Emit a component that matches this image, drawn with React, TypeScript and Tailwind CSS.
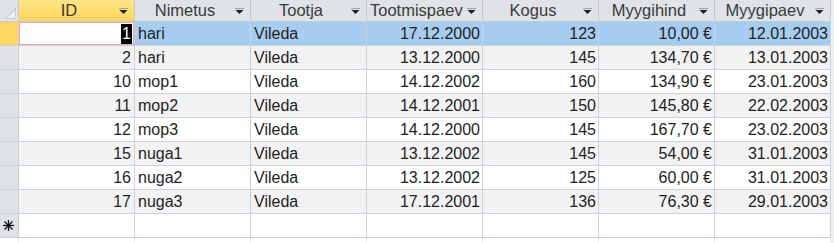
import React from 'react';

interface Row {
  id: number;
  nimetus: string;
  tootja: string;
  tootmispaev: string;
  kogus: number;
  hind: string;
  myygipaev: string;
}

const rows: Row[] = [
  { id: 1, nimetus: 'hari', tootja: 'Vileda', tootmispaev: '17.12.2000', kogus: 123, hind: '10,00 €', myygipaev: '12.01.2003' },
  { id: 2, nimetus: 'hari', tootja: 'Vileda', tootmispaev: '13.12.2000', kogus: 145, hind: '134,70 €', myygipaev: '13.01.2003' },
  { id: 10, nimetus: 'mop1', tootja: 'Vileda', tootmispaev: '14.12.2002', kogus: 160, hind: '134,90 €', myygipaev: '23.01.2003' },
  { id: 11, nimetus: 'mop2', tootja: 'Vileda', tootmispaev: '14.12.2001', kogus: 150, hind: '145,80 €', myygipaev: '22.02.2003' },
  { id: 12, nimetus: 'mop3', tootja: 'Vileda', tootmispaev: '14.12.2000', kogus: 145, hind: '167,70 €', myygipaev: '23.02.2003' },
  { id: 15, nimetus: 'nuga1', tootja: 'Vileda', tootmispaev: '13.12.2002', kogus: 145, hind: '54,00 €', myygipaev: '31.01.2003' },
  { id: 16, nimetus: 'nuga2', tootja: 'Vileda', tootmispaev: '13.12.2002', kogus: 125, hind: '60,00 €', myygipaev: '31.01.2003' },
  { id: 17, nimetus: 'nuga3', tootja: 'Vileda', tootmispaev: '17.12.2001', kogus: 136, hind: '76,30 €', myygipaev: '29.01.2003' },
];

const headers = ['ID', 'Nimetus', 'Tootja', 'Tootmispaev', 'Kogus', 'Myygihind', 'Myygipaev'];

function FilterArrow() {
  return (
    <svg width="9" height="6" viewBox="0 0 9 6" className="shrink-0">
      <rect x="0" y="0" width="9" height="1" fill="#9aa2ad" />
      <path d="M0.5 2 H8.5 L4.5 6 Z" fill="#1f1f1f" />
    </svg>
  );
}

function NewRowStar() {
  return (
    <svg width="11" height="11" viewBox="0 0 11 11">
      <g stroke="#111" strokeWidth="1.3">
        <line x1="5.5" y1="0" x2="5.5" y2="11" />
        <line x1="0" y1="5.5" x2="11" y2="5.5" />
        <line x1="1.5" y1="1.5" x2="9.5" y2="9.5" />
        <line x1="9.5" y1="1.5" x2="1.5" y2="9.5" />
      </g>
    </svg>
  );
}

const cell = 'h-[24px] border-r border-b border-[#c8d1de] flex items-center overflow-hidden whitespace-nowrap';

export default function App() {
  return (
    <div
      className="w-[834px] h-[243px] overflow-hidden bg-[#f0f0f0] text-[16px] text-[#1e1e1e]"
      style={{ fontFamily: '"Liberation Sans", Arial, sans-serif' }}
    >
      <div className="grid grid-cols-[19px_repeat(7,116px)] w-[831px] bg-white">
        {/* header */}
        <div className="h-[22px] border-r border-b border-[#c4cad3] bg-[#dfe3e8] flex items-end justify-end pr-[2px] pb-[2px]">
          <svg width="12" height="12" viewBox="0 0 12 12">
            <path d="M12 0 V12 H0 Z" fill="#c9cfd8" />
            <path d="M11 3 V11 H3 Z" fill="#eef1f5" />
          </svg>
        </div>
        {headers.map((h, i) => (
          <div
            key={h}
            className={`h-[22px] border-r border-b border-[#c4cad3] flex items-center pr-[6px] text-[16.5px] text-[#3a3a3a] ${
              i === 0 ? 'bg-gradient-to-b from-[#ffe585] to-[#fdd45a]' : 'bg-[#dfe3e8]'
            }`}
          >
            <div
              className={`flex-1 overflow-hidden whitespace-nowrap ${
                h === 'Tootmispaev' ? 'text-left pl-[3px] mr-[2px]' : 'text-center'
              }`}
            >
              {h}
            </div>
            <FilterArrow />
          </div>
        ))}

        {/* data rows */}
        {rows.map((r, idx) => {
          const current = idx === 0;
          const bg = current ? 'bg-[#a6cdef]' : idx % 2 === 1 ? 'bg-[#f2f2f2]' : 'bg-white';
          return (
            <React.Fragment key={r.id}>
              <div className={`${cell} ${current ? 'bg-[#fdd760]' : 'bg-[#dfe3e8]'}`} />
              {current ? (
                <div className={`${cell} bg-white justify-end pr-[2px] relative`}>
                  <div className="absolute left-[-1px] top-[-1px] right-[-1px] bottom-[-1px] border-2 border-[#f3a2a9] pointer-events-none" />
                  <span className="bg-black text-white h-[20px] leading-[20px] px-[1px]">{r.id}</span>
                </div>
              ) : (
                <div className={`${cell} ${bg} justify-end pr-[3px]`}>{r.id}</div>
              )}
              <div className={`${cell} ${bg} pl-[3px]`}>{r.nimetus}</div>
              <div className={`${cell} ${bg} pl-[3px]`}>{r.tootja}</div>
              <div className={`${cell} ${bg} justify-end pr-[2px]`}>{r.tootmispaev}</div>
              <div className={`${cell} ${bg} justify-end pr-[2px]`}>{r.kogus}</div>
              <div className={`${cell} ${bg} justify-end pr-[2px]`}>{r.hind}</div>
              <div className={`${cell} ${bg} justify-end pr-[2px]`}>{r.myygipaev}</div>
            </React.Fragment>
          );
        })}

        {/* new record row */}
        <div className={`${cell} bg-[#dfe3e8] pl-[3px]`}>
          <NewRowStar />
        </div>
        {headers.map((h) => (
          <div key={'new-' + h} className={`${cell} bg-white`} />
        ))}

        {/* area below */}
        <div className="h-[6px] border-r border-[#eef0f4] bg-white" />
        {headers.map((h) => (
          <div key={'pad-' + h} className="h-[6px] border-r border-[#eef0f4] bg-white" />
        ))}
      </div>
    </div>
  );
}
